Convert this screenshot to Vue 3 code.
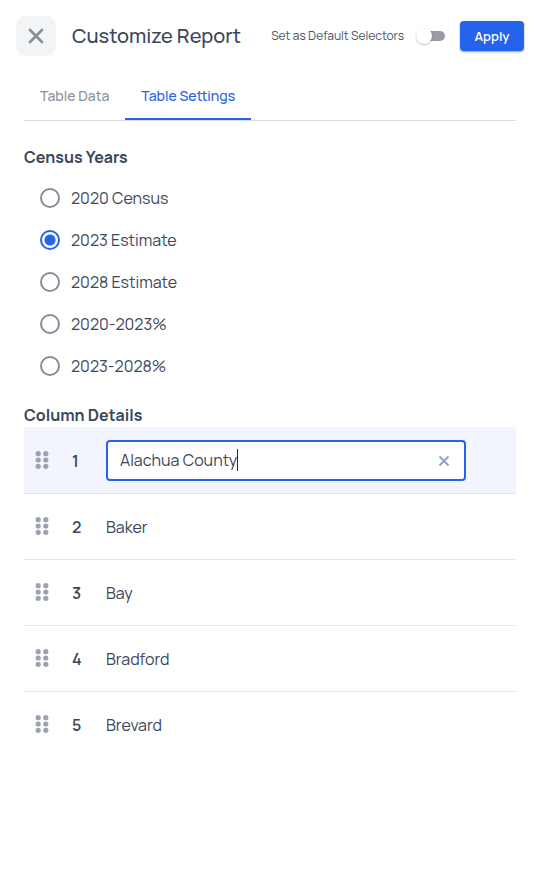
<template>
  <div class="panel">
    <header class="panel-header">
      <button class="close-btn" type="button" aria-label="Close">
        <svg width="16" height="16" viewBox="0 0 16 16" aria-hidden="true">
          <path d="M2 2L14 14M14 2L2 14" />
        </svg>
      </button>
      <h1 class="title">Customize Report</h1>

      <label class="default-toggle">
        <span>Set as Default Selectors</span>
        <input v-model="isDefault" class="switch" type="checkbox" role="switch" />
      </label>

      <button class="apply-btn" type="button">Apply</button>
    </header>

    <main class="content">
      <nav class="tabs" role="tablist">
        <button v-for="tab in tabs" :key="tab" class="tab" :class="{ active: tab === activeTab }" type="button"
          role="tab" :aria-selected="tab === activeTab" @click="activeTab = tab">
          {{ tab }}
        </button>
      </nav>

      <fieldset class="years">
        <legend class="section-title">Census Years</legend>
        <label v-for="year in years" :key="year" class="year">
          <input v-model="selectedYear" class="radio" type="radio" name="census-year" :value="year" />
          <span>{{ year }}</span>
        </label>
      </fieldset>

      <h2 class="section-title">Column Details</h2>
      <ol class="columns">
        <li v-for="(column, index) in columns" :key="column.id" class="column" :class="{ editing: column.id === editingId }">
          <svg class="drag-handle" width="14" height="18" viewBox="0 0 14 18" aria-hidden="true">
            <circle cx="3.2" cy="2.7" r="2.6" />
            <circle cx="10.8" cy="2.7" r="2.6" />
            <circle cx="3.2" cy="9" r="2.6" />
            <circle cx="10.8" cy="9" r="2.6" />
            <circle cx="3.2" cy="15.3" r="2.6" />
            <circle cx="10.8" cy="15.3" r="2.6" />
          </svg>
          <span class="number">{{ index + 1 }}</span>

          <div v-if="column.id === editingId" class="name-field" @click="focusName">
            <input ref="nameInput" v-model="column.name" class="name-input" type="text" aria-label="Column name" />
            <span class="caret" />
            <button class="clear-btn" type="button" aria-label="Clear name" @click="column.name = ''">
              <svg width="12" height="12" viewBox="0 0 12 12" aria-hidden="true">
                <path d="M1.5 1.5L10.5 10.5M10.5 1.5L1.5 10.5" />
              </svg>
            </button>
          </div>
          <span v-else class="name" @click="editColumn(column.id)">{{ column.name }}</span>
        </li>
      </ol>
    </main>
  </div>
</template>



<script setup>
import { nextTick, onMounted, ref } from 'vue'

const tabs = ['Table Data', 'Table Settings']
const activeTab = ref('Table Settings')

const years = ['2020 Census', '2023 Estimate', '2028 Estimate', '2020-2023%', '2023-2028%']
const selectedYear = ref('2023 Estimate')

const isDefault = ref(false)

const columns = ref([
  { id: 1, name: 'Alachua County' },
  { id: 2, name: 'Baker' },
  { id: 3, name: 'Bay' },
  { id: 4, name: 'Bradford' },
  { id: 5, name: 'Brevard' }
])
const editingId = ref(1)
const nameInput = ref([])

// Typing always continues after the last character
function focusName() {
  const input = nameInput.value[0]
  input.focus()
  input.setSelectionRange(input.value.length, input.value.length)
}

async function editColumn(id) {
  editingId.value = id
  await nextTick()
  focusName()
}

onMounted(focusName)
</script>



<style>
body {
  background-color: #ffffff;
}
</style>

<style scoped>
.panel {
  font-family: Manrope, Inter, sans-serif;
  font-size: 16px;
  line-height: 24px;
  color: #3b475a;
}

button,
input {
  font: inherit;
}

/* Header */
.panel-header {
  display: flex;
  align-items: center;
  padding: 16px;
}

.close-btn {
  display: flex;
  align-items: center;
  justify-content: center;
  width: 40px;
  height: 40px;
  flex-shrink: 0;
  padding: 0;
  border: none;
  border-radius: 10px;
  background-color: #f3f4f6;
  cursor: pointer;
}

.close-btn path {
  fill: none;
  stroke: #868e9b;
  stroke-width: 2.6;
  stroke-linecap: round;
}

.title {
  margin: 0 auto 0 16px;
  font-size: 20px;
  font-weight: 500;
  line-height: 28px;
  white-space: nowrap;
}

.default-toggle {
  display: flex;
  align-items: center;
  gap: 12px;
  font-size: 12px;
  line-height: 16px;
  color: #4b5567;
  white-space: nowrap;
}

/* Switch */
.switch {
  position: relative;
  appearance: none;
  width: 29px;
  height: 10px;
  margin: 0;
  border-radius: 5px;
  background-color: #9b9ba5;
  cursor: pointer;
}

.switch::before {
  content: '';
  position: absolute;
  top: -3px;
  left: 0;
  width: 16px;
  height: 16px;
  border-radius: 50%;
  background-color: #ffffff;
  box-shadow: 0 1px 2px rgba(0, 0, 0, 0.25);
}

.switch:checked {
  background-color: #2563eb;
}

.switch:checked::before {
  left: 13px;
}

.apply-btn {
  width: 64px;
  height: 30px;
  flex-shrink: 0;
  margin-left: 15px;
  padding: 0;
  border: none;
  border-radius: 4px;
  background-color: #2563eb;
  box-shadow: 0 1px 2px rgba(0, 0, 0, 0.4);
  color: #ffffff;
  font-size: 13px;
  font-weight: 600;
  cursor: pointer;
}

.content {
  padding: 0 24px;
}

/* Tabs */
.tabs {
  display: flex;
  border-bottom: 1px solid #dcdde0;
}

.tab {
  height: 48px;
  padding: 2px 16px 0;
  border: none;
  border-bottom: 2px solid transparent;
  background: none;
  color: #8b919c;
  font-size: 14px;
  font-weight: 500;
  cursor: pointer;
}

.tab.active {
  border-bottom-color: #2563eb;
  color: #2563eb;
}

.section-title {
  margin: 0;
  padding: 0;
  font-size: 16px;
  font-weight: 700;
  line-height: 24px;
}

/* Census years */
.years {
  margin: 24px 0 16px;
  padding: 0;
  border: none;
}

.year {
  display: flex;
  align-items: center;
  gap: 11px;
  height: 42px;
  padding-left: 16px;
}

.year:first-of-type {
  margin-top: 8px;
}

.radio {
  appearance: none;
  width: 20px;
  height: 20px;
  margin: 0;
  border: 2px solid #868e9b;
  border-radius: 50%;
}

.radio:checked {
  border-color: #2563eb;
  background: radial-gradient(circle, #2563eb 5px, transparent 6px);
}

/* Column list */
.columns {
  margin: 0;
  padding: 0;
  list-style: none;
}

.column {
  display: flex;
  align-items: center;
  box-sizing: border-box;
  height: 66px;
  padding: 0 50px 0 11px;
  border-top: 1px solid #e2e6ee;
}

.column:first-child {
  border-top-color: transparent;
}

.column.editing {
  background-color: #f2f4fe;
}

.drag-handle {
  flex-shrink: 0;
  margin-bottom: 1px;
  fill: #9ca3b0;
}

.number {
  width: 34px;
  flex-shrink: 0;
  margin-left: 23px;
  font-weight: 600;
}

.name-field {
  display: flex;
  flex: 1;
  align-items: center;
  min-width: 0;
  height: 37px;
  border: 2px solid #2563eb;
  border-radius: 4px;
  background-color: #ffffff;
  cursor: text;
}

/* Input is as wide as its text, so the caret follows the last character */
.name-input {
  field-sizing: content;
  min-width: 0;
  padding: 0 0 1px 12px;
  border: none;
  outline: none;
  background: none;
  color: inherit;
  caret-color: transparent;
}

.caret {
  width: 1px;
  height: 22px;
  flex-shrink: 0;
  margin-bottom: 1px;
  background-color: transparent;
}

.name-field:focus-within .caret {
  background-color: #1f2937;
}

.clear-btn {
  display: flex;
  margin: 0 8px 0 auto;
  padding: 6px;
  border: none;
  background: none;
  cursor: pointer;
}

.clear-btn path {
  fill: none;
  stroke: #94a3b8;
  stroke-width: 2;
}
</style>
